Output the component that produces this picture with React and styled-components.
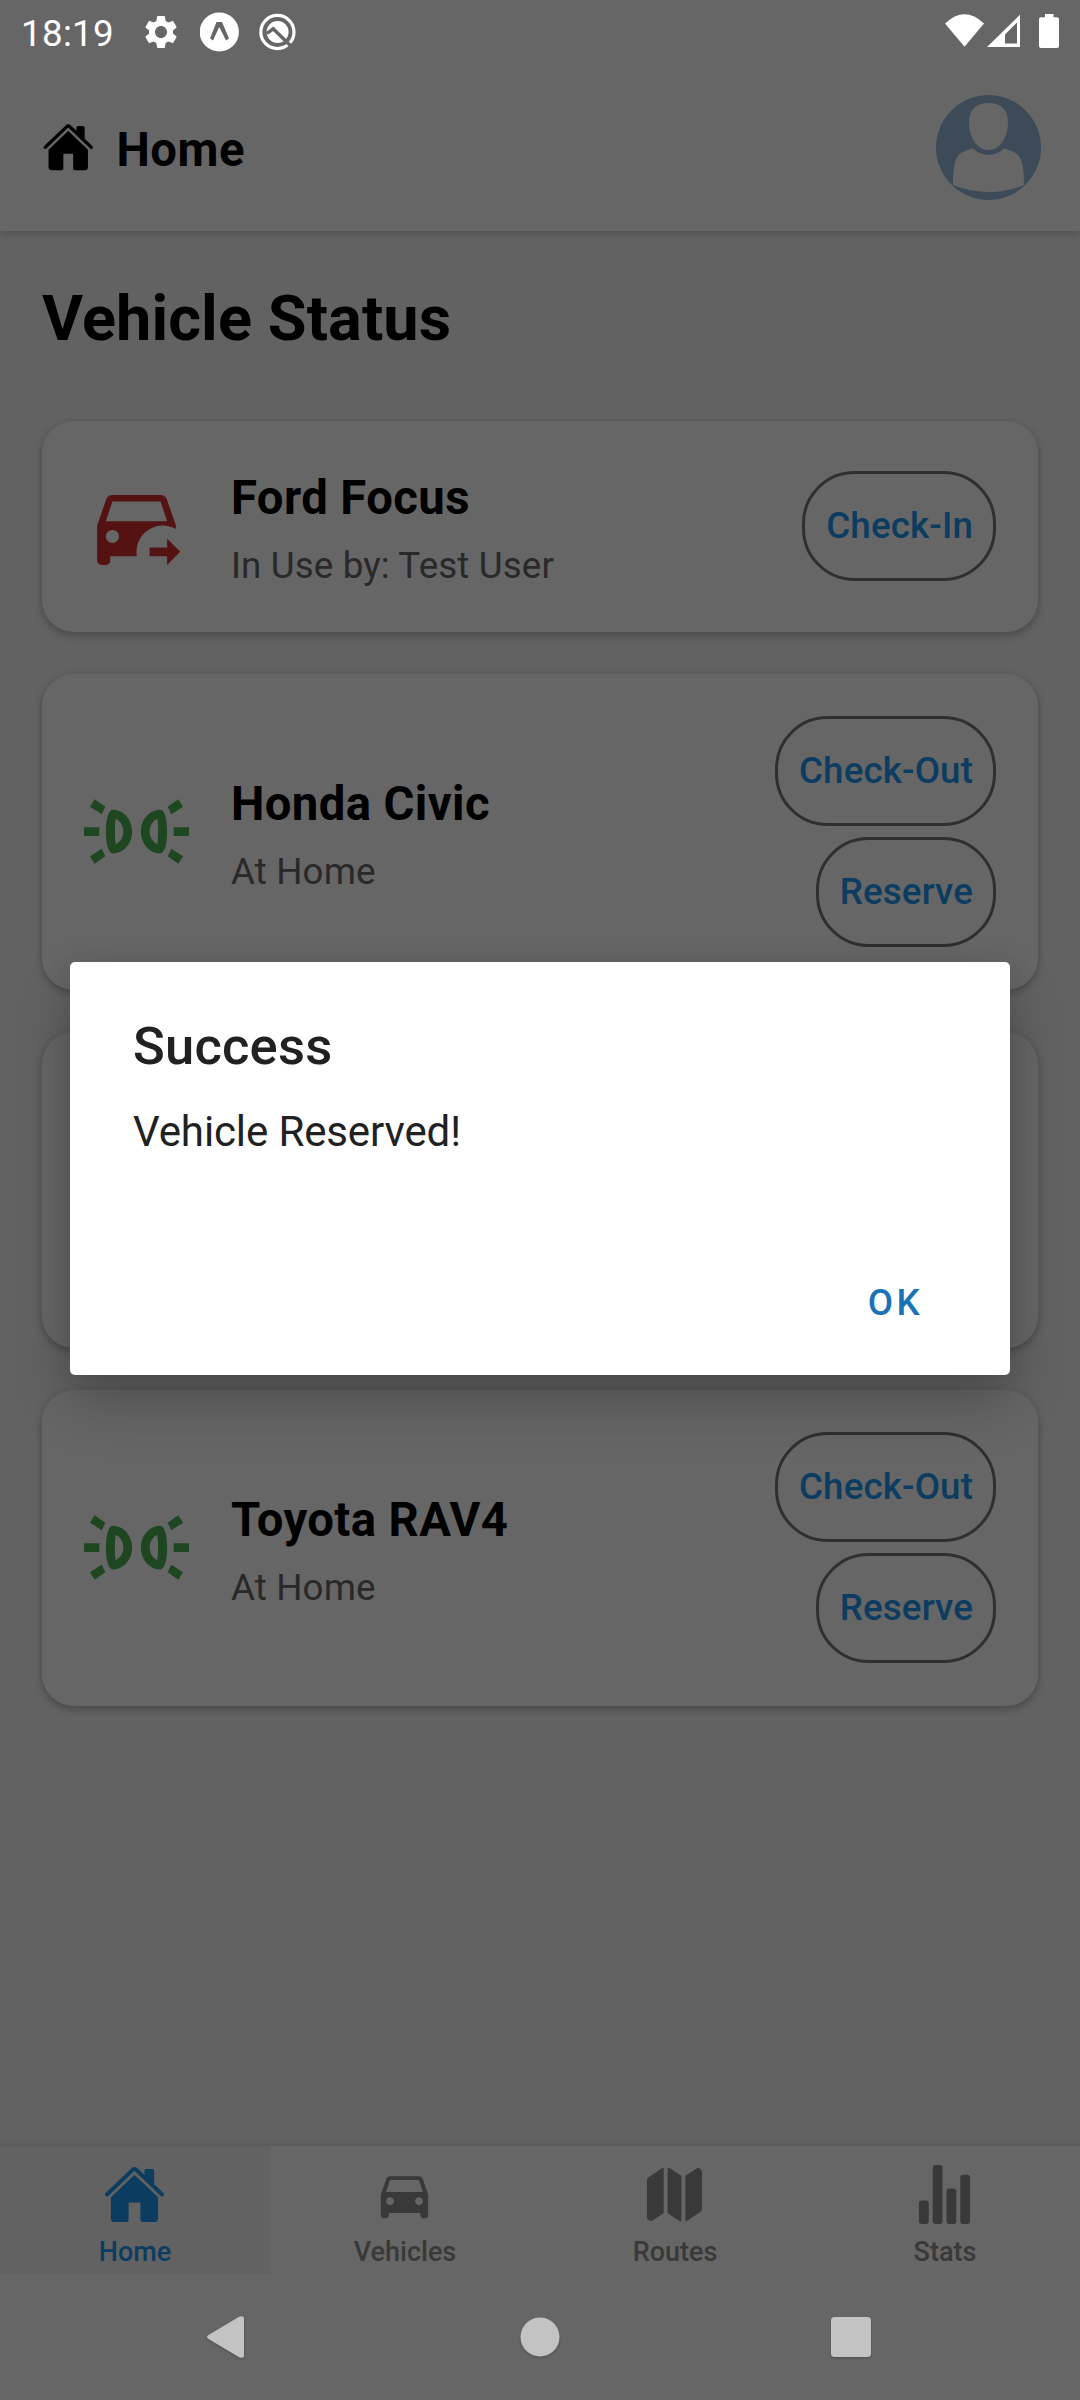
import React from "react";
import styled, { createGlobalStyle } from "styled-components";
import { IoHome, IoMap, IoStatsChart } from "react-icons/io5";
import { MdDirectionsCar, MdSettings } from "react-icons/md";

const GlobalStyle = createGlobalStyle`
  * { box-sizing: border-box; }
  body { margin: 0; background: #666; }
  button { font: inherit; background: none; border: 0; padding: 0; margin: 0; }
  svg { display: block; flex: none; }
`;

const Screen = styled.div`
  position: relative;
  width: 1080px;
  height: 2400px;
  overflow: hidden;
  display: flex;
  flex-direction: column;
  background: #fff;
  font-family: Roboto, "Liberation Sans", sans-serif;
  color: #000;
`;

const Header = styled.header`
  z-index: 1;
  height: 231px;
  flex: none;
  padding: 63px 39px 0 42px;
  display: flex;
  align-items: center;
  justify-content: space-between;
  background: #fff;
  box-shadow: 0 2px 8px rgba(0, 0, 0, 0.18);
`;

const HeaderTitle = styled.h1`
  margin: 0;
  display: flex;
  align-items: center;
  gap: 22px;
  font-size: 47.25px;
  line-height: 56px;
  font-weight: 700;
  letter-spacing: 0.5px;
`;

const HeaderLabel = styled.span`
  padding-top: 5px;
`;

const Main = styled.main`
  flex: 1;
  padding: 51px 42px 0;
  background: #f4f4f4;
`;

const SectionTitle = styled.h2`
  margin: 0 0 65px;
  font-size: 63px;
  line-height: 74px;
  font-weight: 700;
  letter-spacing: 0.1px;
`;

const CardList = styled.div`
  display: flex;
  flex-direction: column;
  gap: 42px;
`;

const Card = styled.article`
  height: ${(p) => (p.$tall ? 316 : 211)}px;
  padding: 0 42px;
  display: flex;
  align-items: center;
  border-radius: 32px;
  background: #fff;
  box-shadow: 0 3px 9px rgba(0, 0, 0, 0.27);
`;

const CardIcon = styled.div`
  margin-bottom: 2px;
`;

const CardText = styled.div`
  flex: 1;
  padding: 6px 0 0 42px;
  display: flex;
  flex-direction: column;
  gap: 10px;
`;

const CarName = styled.div`
  font-size: 47.25px;
  line-height: 63px;
  font-weight: 700;
  letter-spacing: 0.4px;
`;

const CarState = styled.div`
  font-size: 36.75px;
  line-height: 52px;
  letter-spacing: 0.13px;
  color: #666;
`;

const Actions = styled.div`
  margin-bottom: 1px;
  display: flex;
  flex-direction: column;
  align-items: flex-end;
  gap: 11px;
`;

const ActionButton = styled.button`
  height: 110px;
  padding: 0 20px 0 21px;
  border: 3px solid #79747e;
  border-radius: 52.5px;
  font-size: 36.75px;
  line-height: 52px;
  font-weight: 500;
  letter-spacing: 0.12px;
  color: #2196f3;
`;

const TabBar = styled.nav`
  z-index: 1;
  height: 129px;
  flex: none;
  display: grid;
  grid-template-columns: repeat(4, 1fr);
  border-top: 1px solid #e4e4e4;
  background: #fff;
  box-shadow: 0 -1px 5px rgba(0, 0, 0, 0.09);
`;

const Tab = styled.button`
  display: flex;
  flex-direction: column;
  align-items: center;
  padding-top: 17px;
  gap: 10px;
  font-size: 27px;
  line-height: 32px;
  font-weight: 500;
  color: ${(p) => (p.$active ? "#2196f3" : "#8e8e8f")};
  background: ${(p) => (p.$active ? "#f5f5f5" : "transparent")};
`;

const TabIcon = styled.span`
  padding-right: 2px;
`;

const NavArea = styled.div`
  z-index: 1;
  height: 126px;
  flex: none;
  background: #fff;
`;

const Overlay = styled.div`
  position: absolute;
  inset: 0;
  z-index: 2;
  display: flex;
  flex-direction: column;
  background: rgba(0, 0, 0, 0.6);
`;

const StatusBar = styled.div`
  height: 63px;
  flex: none;
  display: flex;
  justify-content: space-between;
  color: #fff;
`;

const StatusLeft = styled.div`
  display: flex;
  align-items: center;
  gap: 19px;
  padding-left: 21px;
`;

const Clock = styled.span`
  width: 101px;
  padding-top: 5px;
  font-size: 36.75px;
  line-height: 44px;
  letter-spacing: 0.3px;
`;

const DialogArea = styled.div`
  flex: 1;
  padding: 899px 70px 0;
`;

const Dialog = styled.section`
  height: 413px;
  padding: 52px 63px 0;
  border-radius: 5px;
  background: #fff;
  color: #212121;
  box-shadow: 0 28px 56px rgba(0, 0, 0, 0.22), 0 2px 26px rgba(0, 0, 0, 0.08);
`;

const DialogTitle = styled.h3`
  margin: 0;
  font-size: 52.5px;
  line-height: 64px;
  font-weight: 500;
  letter-spacing: 0.2px;
`;

const DialogText = styled.p`
  margin: 29px 0 0;
  font-size: 42px;
  line-height: 50px;
  letter-spacing: -0.12px;
`;

const DialogActions = styled.div`
  padding: 124px 24px 0 0;
  display: flex;
  justify-content: flex-end;
`;

const OkButton = styled.button`
  font-size: 36.75px;
  line-height: 44px;
  font-weight: 500;
  letter-spacing: 3.3px;
  color: #1a73b7;
`;

function CarOutIcon() {
  return (
    <svg width="105" height="105" viewBox="0 0 24 24" fill="#d32f2f">
      <path
        fillRule="evenodd"
        d="M18.92 6C18.72 5.42 18.16 5 17.5 5H6.5C5.84 5 5.28 5.42 5.08 6L3 12V20A1 1 0 0 0 4 21H5A1 1 0 0 0 6 20V19H12.08A6 6 0 0 1 18 12A6 6 0 0 1 21 12.8V12ZM5 11L6.5 6.5H17.5L19 11ZM6.5 13A1.5 1.5 0 1 1 6.5 16A1.5 1.5 0 1 1 6.5 13Z"
      />
      <path d="M19 21V19H15V17H19V15L22 18Z" />
    </svg>
  );
}

function ParkingLightsIcon() {
  const half = (
    <>
      <path d="M0 11H3.5V13H0ZM2.44 4.65L4.88 6.32L4.04 8.08L1.37 6.32ZM2.44 19.35L4.88 17.68L4.04 15.92L1.37 17.68Z" />
      <path
        fillRule="evenodd"
        d="M6.6 7C5.5 7 5 9.4 5 12S5.5 17 6.6 17C9 17 11 14.8 11 12S9 7 6.6 7ZM7.25 9.1C8.25 9.6 9 10.7 9 12S8.25 14.4 7.25 14.9C7 13.4 7 10.6 7.25 9.1Z"
      />
    </>
  );
  return (
    <svg width="105" height="105" viewBox="0 0 24 24" fill="#4caf50">
      {half}
      <g transform="matrix(-1 0 0 1 24 0)">{half}</g>
    </svg>
  );
}

function Avatar() {
  return (
    <svg width="105" height="105" viewBox="0 0 105 105">
      <circle cx="52.5" cy="52.5" r="52.5" fill="#98bbdf" />
      <path
        fill="#fff"
        d="M52.5 8C65 8 72 15 72 27C72 42 64 55 52.5 55S33 42 33 27C33 15 40 8 52.5 8Z"
      />
      <path
        fill="#fff"
        d="M36.5 53.5C46 62 59 62 68 53.5C80 57 84 59 86 68C87.5 75 88 80 88 90Q52.5 104 17 90C17 80 17.5 75 19 68C21 59 25 57 36.5 53.5Z"
      />
    </svg>
  );
}

function ExpoIcon() {
  return (
    <svg width="40" height="40" viewBox="0 0 40 40">
      <circle cx="19.3" cy="20" r="19.6" fill="#fff" />
      <path
        fill="#666"
        d="M16.5 10H22L29 26.5L26 28.5L19.6 15.5H19L13 28.5L10 26.5Z"
      />
    </svg>
  );
}

function QIcon() {
  return (
    <svg width="38" height="38" viewBox="0 0 38 38" fill="none">
      <circle cx="18.4" cy="19" r="16.6" stroke="#fff" strokeWidth="3.2" />
      <circle cx="18.6" cy="19" r="11" fill="#fff" />
      <path d="M7.9 20.5L14.2 15.8L33.4 34.5" stroke="#666" strokeWidth="3.4" />
    </svg>
  );
}

function StatusIcons() {
  return (
    <svg width="140" height="63" viewBox="940 0 140 63" fill="#fff">
      <path d="M945 23.5Q964.5 5 984 23.5L964.5 46.7Z" />
      <path
        fillRule="evenodd"
        d="M1020 14.7V47H987ZM1017 22.5L1005 34.5V43.5H1017Z"
      />
      <path d="M1045 14H1053.5V17.3H1057Q1059 17.3 1059 19.3V46Q1059 48 1057 48H1041Q1039 48 1039 46V19.3Q1039 17.3 1041 17.3H1045Z" />
    </svg>
  );
}

const NavShape = styled.svg`
  filter: drop-shadow(0 1px 1px rgba(0, 0, 0, 0.25));
`;

function SystemButtons() {
  return (
    <NavShape width="1080" height="126" viewBox="0 0 1080 126" fill="#c3c3c3">
      <path d="M208.5 61L239.5 42.6Q244 41 244 45V81Q244 85 239.5 83.4L208.5 65Q205.5 63 208.5 61Z" />
      <circle cx="540" cy="63" r="19.5" />
      <rect x="831" y="43" width="40" height="40" rx="3.5" />
    </NavShape>
  );
}

const vehicles = [
  { name: "Ford Focus", state: "In Use by: Test User", actions: ["Check-In"] },
  { name: "Honda Civic", state: "At Home", actions: ["Check-Out", "Reserve"] },
  { hidden: true },
  { name: "Toyota RAV4", state: "At Home", actions: ["Check-Out", "Reserve"] },
];

const tabs = [
  { label: "Home", Icon: IoHome },
  { label: "Vehicles", Icon: MdDirectionsCar },
  { label: "Routes", Icon: IoMap },
  { label: "Stats", Icon: IoStatsChart },
];

function VehicleCard({ vehicle }) {
  if (vehicle.hidden) return <Card $tall />;
  const inUse = vehicle.actions.length === 1;
  return (
    <Card $tall={!inUse}>
      <CardIcon>{inUse ? <CarOutIcon /> : <ParkingLightsIcon />}</CardIcon>
      <CardText>
        <CarName>{vehicle.name}</CarName>
        <CarState>{vehicle.state}</CarState>
      </CardText>
      <Actions>
        {vehicle.actions.map((label) => (
          <ActionButton key={label}>{label}</ActionButton>
        ))}
      </Actions>
    </Card>
  );
}

export default function App() {
  return (
    <Screen>
      <GlobalStyle />
      <Header>
        <HeaderTitle>
          <IoHome size={52.5} />
          <HeaderLabel>Home</HeaderLabel>
        </HeaderTitle>
        <Avatar />
      </Header>
      <Main>
        <SectionTitle>Vehicle Status</SectionTitle>
        <CardList>
          {vehicles.map((vehicle, i) => (
            <VehicleCard key={i} vehicle={vehicle} />
          ))}
        </CardList>
      </Main>
      <TabBar>
        {tabs.map(({ label, Icon }, i) => (
          <Tab key={label} $active={i === 0}>
            <TabIcon>
              <Icon size={63} />
            </TabIcon>
            {label}
          </Tab>
        ))}
      </TabBar>
      <NavArea />
      <Overlay>
        <StatusBar>
          <StatusLeft>
            <Clock>18:19</Clock>
            <MdSettings size={40} />
            <ExpoIcon />
            <QIcon />
          </StatusLeft>
          <StatusIcons />
        </StatusBar>
        <DialogArea>
          <Dialog>
            <DialogTitle>Success</DialogTitle>
            <DialogText>Vehicle Reserved!</DialogText>
            <DialogActions>
              <OkButton>OK</OkButton>
            </DialogActions>
          </Dialog>
        </DialogArea>
        <SystemButtons />
      </Overlay>
    </Screen>
  );
}
